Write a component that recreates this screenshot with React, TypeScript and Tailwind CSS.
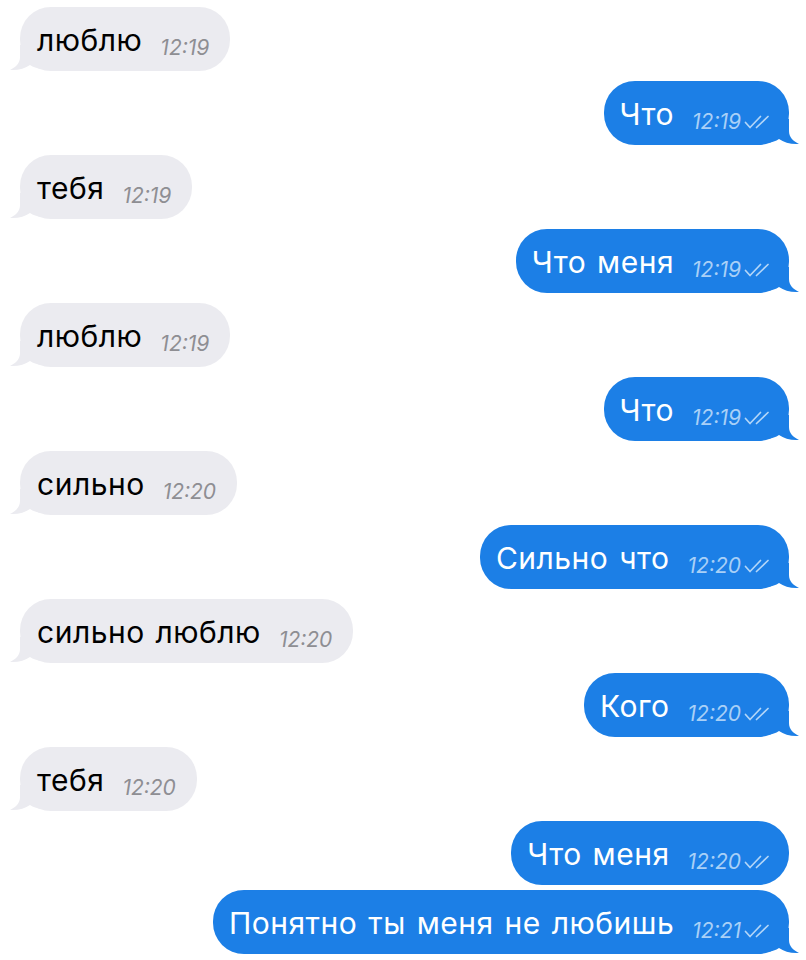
import React from "react";

type Msg = { text: string; time: string; out: boolean; tail?: boolean; tight?: boolean };

const msgs: Msg[] = [
  { text: "люблю", time: "12:19", out: false },
  { text: "Что", time: "12:19", out: true },
  { text: "тебя", time: "12:19", out: false },
  { text: "Что меня", time: "12:19", out: true },
  { text: "люблю", time: "12:19", out: false },
  { text: "Что", time: "12:19", out: true },
  { text: "сильно", time: "12:20", out: false },
  { text: "Сильно что", time: "12:20", out: true },
  { text: "сильно люблю", time: "12:20", out: false },
  { text: "Кого", time: "12:20", out: true },
  { text: "тебя", time: "12:20", out: false },
  { text: "Что меня", time: "12:20", out: true, tail: false },
  { text: "Понятно ты меня не любишь", time: "12:21", out: true, tight: true },
];

function Checks() {
  return (
    <svg width="28" height="14" viewBox="0 0 28 14" fill="none" className="ml-[3px]">
      <path d="M1.5 7.5 L6 12.5 L16.5 1.5" stroke="#b3d6f8" strokeWidth="1.7" strokeLinecap="round" strokeLinejoin="round" />
      <path d="M12.5 12.5 L24 1.5" stroke="#b3d6f8" strokeWidth="1.7" strokeLinecap="round" />
    </svg>
  );
}

function TailIn() {
  return (
    <svg width="32" height="26" viewBox="0 0 32 26" className="absolute left-[-10px] bottom-0">
      <path d="M10 0 L10 12 C10 18 6 22 0 25 C8 25.6 15 23.5 20 20 C23 22 27 23.5 32 24 L32 0 Z" fill="#ebebf0" />
    </svg>
  );
}

function TailOut() {
  return (
    <svg width="32" height="26" viewBox="0 0 32 26" className="absolute right-[-10px] bottom-0">
      <path d="M22 0 L22 12 C22 18 26 22 32 25 C24 25.6 17 23.5 12 20 C9 22 5 23.5 0 24 L0 0 Z" fill="#1c7fe6" />
    </svg>
  );
}

function Bubble({ m }: { m: Msg }) {
  const showTail = m.tail !== false;
  return (
    <div className={`flex ${m.out ? "justify-end" : "justify-start"} ${m.tight ? "-mt-[5px]" : ""}`}>
      <div
        className={`relative h-[64px] rounded-[31px] pt-[15px] pb-[13px] ${
          m.out ? "bg-[#1c7fe6] text-white pl-[16px] pr-[17px]" : "bg-[#ebebf0] text-black pl-[17px] pr-[21px]"
        }`}
      >
        {showTail && (m.out ? <TailOut /> : <TailIn />)}
        <div className="relative flex items-baseline">
          <span className="text-[30px] leading-[36px] whitespace-nowrap tracking-[0.5px] [word-spacing:2px]">{m.text}</span>
          <span
            className={`ml-[18px] flex items-center text-[21px] italic leading-[24px] translate-y-[4px] ${
              m.out ? "text-[#a9d0f7]" : "text-[#8e8e93]"
            }`}
          >
            {m.time}
            {m.out && <Checks />}
          </span>
        </div>
      </div>
    </div>
  );
}

export default function App() {
  return (
    <div
      className="w-[806px] h-[960px] bg-white overflow-hidden pt-[7px] pl-[20px] pr-[17px] flex flex-col gap-[10px]"
      style={{ fontFamily: 'Inter, "Liberation Sans", sans-serif' }}
    >
      {msgs.map((m, i) => (
        <Bubble key={i} m={m} />
      ))}
    </div>
  );
}
